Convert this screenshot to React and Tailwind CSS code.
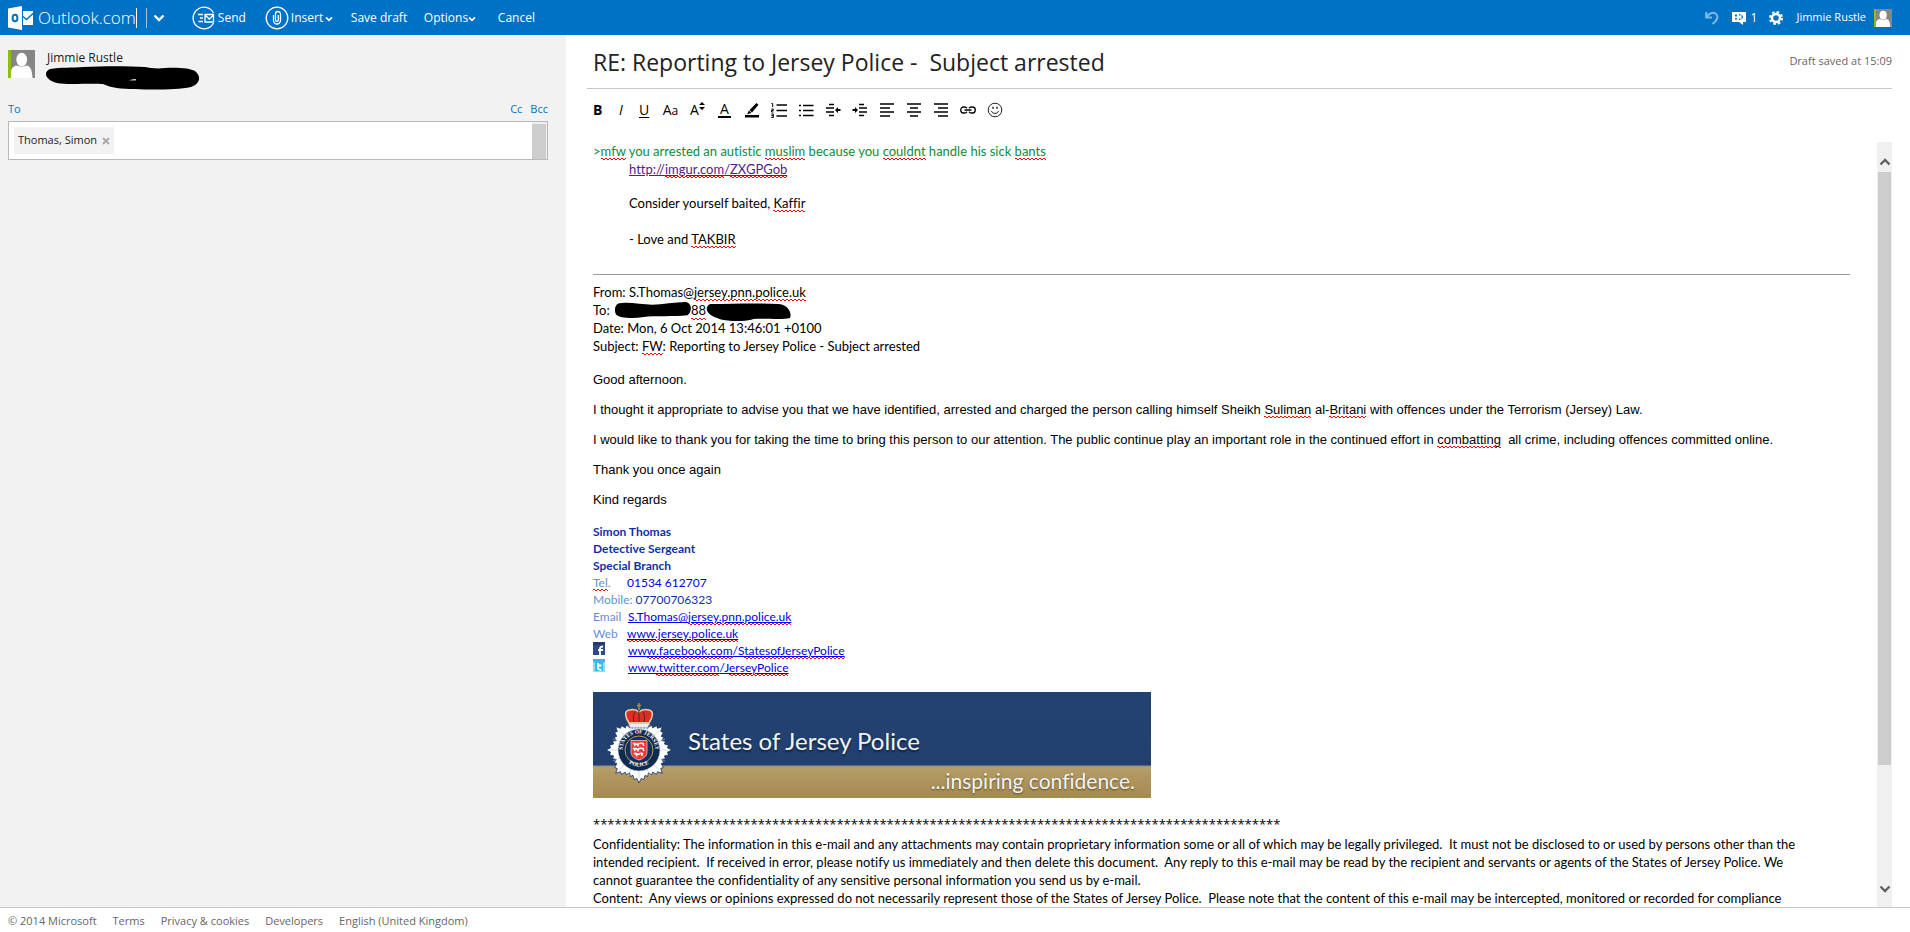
import { useState } from "react";

function Typo({ children }) {
  return (
    <span className="bg-[linear-gradient(90deg,#f00_50%,transparent_50%),linear-gradient(90deg,transparent_50%,#f00_50%)] bg-[length:4px_1px] bg-[position:0_calc(100%-1px),0_100%] bg-repeat-x pb-px">
      {children}
    </span>
  );
}

function Avatar({ className }) {
  return (
    <svg viewBox="0 0 27 27" preserveAspectRatio="none" className={className} role="img" aria-label="Profile picture">
      <rect width="27" height="27" fill="#868686" />
      <rect width="3" height="27" fill="#8cbd18" />
      <ellipse cx="13.7" cy="9.3" rx="5.4" ry="6.6" fill="#fff" />
      <path d="M3 27v-5c0-4 2-6.500 6-7 1.500 1.500 7.500 1.500 9 0 4 .5 6 3 6.500 12z" fill="#fff" />
    </svg>
  );
}

function Chevron({ className }) {
  return (
    <svg viewBox="0 0 12 8" className={className} aria-hidden="true">
      <path d="M1.500 1.500L6 6l4.500-4.500" fill="none" stroke="currentColor" strokeWidth="2.300" />
    </svg>
  );
}

function OutlookLogo() {
  return (
    <svg viewBox="0 0 25 24" className="h-6 w-[25px]" aria-hidden="true">
      <path d="M0 2.500L14 0v24L0 21.500z" fill="#fff" />
      <ellipse cx="7" cy="12" rx="2.400" ry="3.300" fill="none" stroke="#0072c6" strokeWidth="2" />
      <path d="M15 5h10v14H15z" fill="#fff" />
      <path d="M15 10.500l3.500 3L25 7.500" fill="none" stroke="#0072c6" strokeWidth="1.500" />
    </svg>
  );
}

function SendIcon() {
  return (
    <svg viewBox="0 0 24 24" className="size-6" fill="none" stroke="#fff" strokeWidth="1.300" aria-hidden="true">
      <path d="M21.500 7A10.800 10.800 0 1 0 21.500 17" />
      <path d="M6 8.500h5M8 12h3M6.500 15.500h4.500" />
      <path d="M13 8.500h8.500v7.500H13zM13 9l4.300 4 4.200-4" />
    </svg>
  );
}

function InsertIcon() {
  return (
    <svg viewBox="0 0 24 24" className="size-6" fill="none" stroke="#fff" strokeWidth="1.300" aria-hidden="true">
      <circle cx="12" cy="12" r="10.800" />
      <path d="M8.500 9v5.500a3.500 3.500 0 0 0 7 0V8a2.500 2.500 0 0 0-5 0v6a1.400 1.400 0 0 0 2.800 0V9" />
    </svg>
  );
}

function Tool({ label, children }) {
  return (
    <button type="button" aria-label={label} title={label} className="flex h-6 w-[27px] items-center justify-center text-black">
      {children}
    </button>
  );
}

function Lines({ d, children }) {
  return (
    <svg viewBox="0 0 16 16" className="size-4" aria-hidden="true">
      <path d={d} stroke="#000" strokeWidth="1.600" fill="none" />
      {children}
    </svg>
  );
}

function Toolbar() {
  return (
    <div role="toolbar" aria-label="Formatting" className="flex h-[42px] items-center">
      <button type="button" aria-label="Bold" className="flex h-6 w-[22px] items-center text-sm font-bold text-black">B</button>
      <button type="button" aria-label="Italic" className="flex h-6 w-6 items-center pl-1 text-sm text-black italic">I</button>
      <button type="button" aria-label="Underline" className="flex h-6 w-[18px] items-center text-sm text-black underline underline-offset-2">U</button>
      <Tool label="Font"><span className="text-sm font-medium">A<span className="text-xs">a</span></span></Tool>
      <Tool label="Font size">
        <span className="text-sm font-medium">A</span>
        <svg viewBox="0 0 6 8" className="mb-2 h-2 w-1.5" aria-hidden="true"><path d="M0 3l3-3 3 3zM0 5h6L3 8z" /></svg>
      </Tool>
      <Tool label="Font colour">
        <span className="h-4 border-b-2 border-black px-0.5 text-sm leading-[14px] font-medium">A</span>
      </Tool>
      <Tool label="Highlight">
        <svg viewBox="0 0 16 16" className="size-4" aria-hidden="true">
          <path d="M1 13h14v2.500H1zM12.500 1l2 1.800L8 10.500 5.500 8zM5 8.600l2.400 2.400L3 12.200z" />
        </svg>
      </Tool>
      <Tool label="Numbered list">
        <Lines d="M5.500 3h10.500M5.500 8.500h10.500M5.500 14h10.500">
          <path d="M.5 1.500h1.200v3.500M.3 7h1.900v1.500H.5v1.500h2M.3 12h2v3.500h-2M.3 13.700h2" fill="none" stroke="#000" />
        </Lines>
      </Tool>
      <Tool label="Bulleted list">
        <Lines d="M5 3.500h10.500M5 8.500h10.500M5 13.500h10.500M1 3.500h2M1 8.500h2M1 13.500h2" />
      </Tool>
      <Tool label="Decrease indent">
        <Lines d="M4 2.500h5M1 6h8M1 10h8M4 13.500h5"><path d="M10 8l3-3v2h2.500v2H13v2z" /></Lines>
      </Tool>
      <Tool label="Increase indent">
        <Lines d="M7 2.500h5M7 6h8M7 10h8M7 13.500h5"><path d="M6 8L3 5v2H.5v2H3v2z" /></Lines>
      </Tool>
      <Tool label="Align left"><Lines d="M1 2h14M1 6h10M1 10h14M1 14h10" /></Tool>
      <Tool label="Align centre"><Lines d="M1 2h14M4 6h8M1 10h14M4 14h8" /></Tool>
      <Tool label="Align right"><Lines d="M1 2h14M5 6h10M1 10h14M5 14h10" /></Tool>
      <Tool label="Hyperlink">
        <svg viewBox="0 0 16 16" className="size-4" fill="none" stroke="#000" strokeWidth="1.300" aria-hidden="true">
          <path d="M7 6.200C6.500 5.300 5.500 5 4.500 5h-.8a3 3 0 0 0 0 6h.8C5.500 11 6.500 10.700 7 9.800M9 6.200C9.500 5.300 10.500 5 11.500 5h.8a3 3 0 0 1 0 6h-.8C10.500 11 9.500 10.700 9 9.800M4.500 8h7" />
        </svg>
      </Tool>
      <Tool label="Emoticon">
        <svg viewBox="0 0 16 16" className="size-4" fill="none" stroke="#222" aria-hidden="true">
          <circle cx="8" cy="8" r="6.800" />
          <path d="M4.500 9c.7 3.200 6.300 3.200 7 0" />
          <path d="M6 4.800v2M10 4.800v2" strokeWidth="1.500" />
        </svg>
      </Tool>
    </div>
  );
}

const rays = Array.from({ length: 80 }, (_, i) => {
  const a = (i / 80) * Math.PI * 2 - Math.PI / 2;
  const k = i % 10;
  const d = Math.min(k, 10 - k);
  const outer = [33, 30.5, 30, 28, 28, 26.5][d];
  const r = i % 2 ? outer - 2 : outer;
  return `${(32 + Math.cos(a) * r).toFixed(1)},${(48 + Math.sin(a) * r).toFixed(1)}`;
}).join(" ");

function Badge() {
  return (
    <svg viewBox="0 0 64 82" className="h-[82px] w-16 shrink-0" role="img" aria-label="Police badge">
      <defs>
        <path id="arc-top" d="M16.300 53a16.500 16.500 0 1 1 31.400 0" />
        <path id="arc-bottom" d="M16 56a19.500 19.500 0 0 0 32 0" />
      </defs>
      <polygon points={rays} fill="#fff" stroke="#12305f" strokeWidth=".8" />
      <path d="M32 20v56M4 48h56M12 28l40 40M52 28L12 68M21 22l22 52M43 22L21 74M6 37l52 22M58 37L6 59" stroke="#b9c4d6" strokeWidth=".6" />
      <path d="M21 21h22l-2 5H23z" fill="#e8edf5" stroke="#12305f" strokeWidth=".8" strokeDasharray="2 1" />
      <path d="M22 21c-4-6-5-12 0-13 4-1 8 0 10 2 2-2 6-3 10-2 5 1 4 7 0 13z" fill="#e02b26" stroke="#e4d3a0" strokeWidth="1.500" />
      <path d="M32 9v11M28 10c-2 3-2 6-1 10M36 10c2 3 2 6 1 10" stroke="#5d2422" strokeWidth="1" fill="none" />
      <path d="M22 21h20" stroke="#e4d3a0" strokeWidth="1.500" strokeDasharray="1.500 1" />
      <path d="M32 1v7M30 3.500h4" stroke="#b38b3a" strokeWidth="1.500" />
      <circle cx="32" cy="48" r="21" fill="#10294f" stroke="#dce3ec" strokeWidth=".6" />
      <circle cx="32" cy="48" r="14" fill="#12305f" stroke="#b59a5c" strokeWidth="1" />
      <text fontSize="5.500" fontWeight="700" fill="#fff" fontFamily="Liberation Serif, serif" textAnchor="middle">
        <textPath href="#arc-top" startOffset="50%">STATES OF JERSEY</textPath>
      </text>
      <text fontSize="5.500" fontWeight="700" fill="#fff" fontFamily="Liberation Serif, serif" textAnchor="middle">
        <textPath href="#arc-bottom" startOffset="50%">POLICE</textPath>
      </text>
      <path d="M24 38.500h16V50c0 4-3 6.500-8 8-5-1.500-8-4-8-8z" fill="#ee3a34" stroke="#f7d9d4" strokeWidth=".7" />
      <path d="M26 42c2-2 3 1 5 0s4-1 6 0M27 41l1 3M31 42v2.500M36 42l1 2M26 47c2-2 3 1 5 0s4-1 6 0M27 46l1 3M31 47v2.500M36 47l1 2M27 52c2-2 3 1 5 0s3-1 4 0M29 52l1 2.500M35 52v2" stroke="#fff" strokeWidth="1.500" fill="none" />
    </svg>
  );
}

function Banner() {
  return (
    <div className="relative h-[106px] w-[558px] bg-[linear-gradient(180deg,#234171_0,#21406f_73px,#8c9199_74px,#b59d69_75px,#a58a4f_106px)] font-['Lato',sans-serif] text-[#f4f4f4]">
      <div className="absolute top-2.5 left-3.5 flex items-center gap-[17px]">
        <Badge />
        <span className="pb-1 text-2xl text-shadow-[0_2px_2px_rgb(0_0_0/0.5)]">States of Jersey Police</span>
      </div>
      <span className="absolute right-4 bottom-[5px] text-[21px] leading-6 text-shadow-[0_1px_2px_rgb(0_0_0/0.5)]">...inspiring confidence.</span>
    </div>
  );
}

function Header() {
  return (
    <header className="flex h-[35px] shrink-0 items-center justify-between bg-[#0072c6] pr-[18px] pl-2 text-white">
      <div className="flex items-center">
        <a href="#home" className="flex items-center gap-[5px]">
          <OutlookLogo />
          <span className="border-r border-white text-[17px] leading-5 font-light">Outlook.com</span>
        </a>
        <button type="button" aria-label="Switch app" className="ml-[9px] flex h-5 items-center border-l border-white/60 pl-1.5">
          <Chevron className="h-2 w-3" />
        </button>
        <nav aria-label="Message actions" className="ml-[27px] flex items-center text-xs font-medium">
          <button type="button" className="flex w-[73px] items-center gap-0.5"><SendIcon />Send</button>
          <button type="button" className="flex w-[86px] items-center gap-0.5"><InsertIcon />Insert<Chevron className="mt-0.5 h-1.5 w-2" /></button>
          <button type="button" className="w-[73px] text-left">Save draft</button>
          <button type="button" className="flex w-[74px] items-center">Options<Chevron className="mt-0.5 h-1.5 w-2" /></button>
          <button type="button">Cancel</button>
        </nav>
      </div>
      <div className="flex items-center text-[11px]">
        <button type="button" aria-label="Undo" className="mr-[13px]">
          <svg viewBox="0 0 14 14" className="size-3.5" fill="none" stroke="#7fb8e2" strokeWidth="2" aria-hidden="true">
            <path d="M1.200 1v5.500H7M1.500 6C4 2 8 1 10.500 2.500c3.500 2.500 2 7-3 10.500" />
          </svg>
        </button>
        <button type="button" className="mr-3 flex items-center gap-[5px] text-xs">
          <svg viewBox="0 0 14 14" className="size-3.5" aria-hidden="true">
            <path d="M0 1h14v10h-3v3l-4-3H0z" fill="#fff" />
            <path d="M3 3.500h2v2H3zM3 7h2v1.500H3zM7 3h1.500v1.500H7zM7 7.500h1.500V9H7zM9.500 3.500c2 1.500 2 3.500 0 5" fill="#0072c6" />
          </svg>
          1
        </button>
        <button type="button" aria-label="Settings" className="mr-[13px]">
          <svg viewBox="0 0 14 14" className="size-3.5" fill="none" stroke="#fff" aria-hidden="true">
            <circle cx="7" cy="7" r="4" strokeWidth="2.400" />
            <circle cx="7" cy="7" r="6" strokeWidth="2" strokeDasharray="2.500 2.210" />
          </svg>
        </button>
        <a href="#account" className="flex items-center gap-2">Jimmie Rustle<Avatar className="size-[18px]" /></a>
      </div>
    </header>
  );
}

function Recipients() {
  const [to, setTo] = useState("");
  return (
    <aside className="w-[566px] shrink-0 bg-[#f2f2f2] pt-[15px] pr-[18px] pl-2 text-xs">
      <div className="flex gap-3">
        <Avatar className="h-7 w-[27px]" />
        <div className="leading-4">
          <p>Jimmie Rustle</p>
          <svg viewBox="0 0 154 24" className="-ml-0.5 h-6 w-[154px]" role="img" aria-label="Hidden address">
            <path d="M5 3c10-2 24-1 33-2 20-1 45-1 62 0 5 1 12 2 20 1 12-1 25 0 30 3 6 5 6 12-4 16-15 3-40 3-56 2-14 0-24-1-32-5-12-1-36 1-46-1C0 14-2 6 5 3z" />
            <path d="M84 14.500l4-1.500h3v1.500z" fill="#bbb" />
          </svg>
        </div>
      </div>
      <div className="mt-[11px] flex justify-between text-[11px] leading-4 text-[#0072c6]">
        <label htmlFor="to">To</label>
        <span className="flex gap-2">
          <button type="button">Cc</button>
          <button type="button">Bcc</button>
        </span>
      </div>
      <div className="mt-1 flex h-[39px] border border-[#b8b8b8] bg-white pl-[5px]">
        <span className="my-[5px] flex w-[100px] shrink-0 items-center justify-between bg-[#f2f2f2] px-1 text-[11px] whitespace-nowrap">
          Thomas, Simon
          <button type="button" aria-label="Remove Thomas, Simon">
            <svg viewBox="0 0 8 8" className="size-2" aria-hidden="true"><path d="M1 1l6 6M7 1L1 7" stroke="#aaa" strokeWidth="2" /></svg>
          </button>
        </span>
        <input id="to" value={to} onChange={(e) => setTo(e.target.value)} className="min-w-0 flex-1 px-2 outline-none" />
        <span className="w-[15px] border-t-2 border-r border-[#f0f0f0] bg-[#cdcdcd]" />
      </div>
    </aside>
  );
}

function Scrollbar() {
  return (
    <div aria-hidden="true" className="flex w-[15px] shrink-0 flex-col items-center bg-[#f0f0f0] text-[#606060]">
      <div className="flex h-[30px] items-end pb-1.5"><Chevron className="h-2 w-3 rotate-180" /></div>
      <div className="w-[13px] flex-[593] bg-[#cdcdcd]" />
      <div className="flex-[112]" />
      <div className="flex h-[30px] items-start pt-2"><Chevron className="h-2 w-3" /></div>
    </div>
  );
}

function Link({ href, children }) {
  return <a href={href} className="text-[#0000ee] underline">{children}</a>;
}

function Redacted({ d, className, label }) {
  return <svg viewBox="0 0 84 18" preserveAspectRatio="none" className={className} role="img" aria-label={label}><path d={d} /></svg>;
}

function Message() {
  return (
    <article className="min-w-0 flex-1 overflow-hidden pr-[27px] pl-[6px] font-['Lato',sans-serif] text-[13px] leading-[18px] text-black [font-variant-ligatures:none]">
      <p className="text-[#0f8a3c]">
        &gt;<Typo>mfw</Typo> you arrested an autistic <Typo>muslim</Typo> because you <Typo>couldnt</Typo> handle his sick <Typo>bants</Typo>
      </p>
      <div className="pl-9">
        <a href="http://imgur.com/ZXGPGob" className="text-[#551a8b] underline">http://<Typo>imgur.com</Typo>/<Typo>ZXGPGob</Typo></a>
        <p className="mt-4">Consider yourself baited, <Typo>Kaffir</Typo></p>
        <p className="mt-[18px]">- Love and <Typo>TAKBIR</Typo></p>
      </div>
      <hr className="mt-[26px] mb-2 border-[#9a9a9a]" />
      <p>From: S.Thomas@<Typo>jersey.pnn.police.uk</Typo></p>
      <p className="flex h-[18px] items-center">
        To:&nbsp;
        <Redacted className="ml-0.5 h-4 w-[76px]" label="Hidden name" d="M3 2c10-3 26 1 38 1S66 0 78 0c8 1 7 12 2 15-14 2-38 0-48 2-14 2-27 1-31-3C-1 9 0 4 3 2z" />
        <Typo>88</Typo>
        <Redacted className="mt-1 h-[18px] w-[85px]" label="Hidden domain" d="M4 1c20 0 44-1 68 0 10 1 13 10 11 14-8 2-24 0-36 1-8 3-28 3-36-1C2 12-3 5 4 1z" />
      </p>
      <p>Date: Mon, 6 Oct 2014 13:46:01 +0100</p>
      <p>Subject: <Typo>FW</Typo>: Reporting to Jersey Police - Subject arrested</p>

      <div className="mt-4 flex flex-col gap-3 font-['Liberation_Sans',sans-serif]">
        <p>Good afternoon.</p>
        <p>
          I thought it appropriate to advise you that we have identified, arrested and charged the person calling himself Sheikh <Typo>Suliman</Typo> al-<Typo>Britani</Typo> with offences under the Terrorism (Jersey) Law.
        </p>
        <p>
          I would like to thank you for taking the time to bring this person to our attention. The public continue play an important role in the continued effort in <Typo>combatting</Typo>&nbsp; all crime, including offences committed online.
        </p>
        <p>Thank you once again</p>
        <p>Kind regards</p>
      </div>

      <address className="mt-3.5 text-xs leading-[17px] text-[#6a8fd0] not-italic">
        <p className="font-bold text-[#1230a8]">Simon Thomas</p>
        <p className="font-bold text-[#1230a8]">Detective Sergeant</p>
        <p className="font-bold text-[#1230a8]">Special Branch</p>
        <p className="flex"><span className="w-[34px]"><Typo>Tel</Typo>.</span><span className="text-[#0000ee]">01534 612707</span></p>
        <p>Mobile: <span className="text-[#1230a8]">07700706323</span></p>
        <p className="flex"><span className="w-[35px]">Email</span><Link href="mailto:S.Thomas@jersey.pnn.police.uk">S.Thomas@<Typo>jersey.pnn.police.uk</Typo></Link></p>
        <p className="flex"><span className="w-[34px]">Web</span><Link href="http://www.jersey.police.uk"><Typo>www.jersey.police.uk</Typo></Link></p>
        <p className="flex">
          <span className="w-[35px]">
            <svg viewBox="0 0 12 13" className="h-[13px] w-3" role="img" aria-label="Facebook">
              <rect width="12" height="13" fill="#2f4a86" />
              <rect width="12" height="3" fill="#233a6d" />
              <path d="M7 13V6.500C7 5 8 4.500 10 4.500M5 8h5" stroke="#fff" strokeWidth="1.800" fill="none" />
            </svg>
          </span>
          <Link href="http://www.facebook.com/StatesofJerseyPolice">ww<Typo>w.facebook.com</Typo>/S<Typo>tatesofJerseyPolice</Typo></Link>
        </p>
        <p className="flex">
          <span className="w-[35px]">
            <svg viewBox="0 0 12 13" className="h-[13px] w-3" role="img" aria-label="Twitter">
              <rect width="12" height="13" fill="#8fdcf5" />
              <rect width="12" height="3" fill="#35b9e6" />
              <rect x="2" y="3" width="8" height="9" fill="#35b9e6" />
              <path d="M5 4v5c0 1.500 1 1.800 3.500 1.800M5 6.500h3.500" stroke="#fff" strokeWidth="1.800" fill="none" />
            </svg>
          </span>
          <Link href="http://www.twitter.com/JerseyPolice">www<Typo>.twitter.com</Typo>/J<Typo>erseyPolice</Typo></Link>
        </p>
      </address>

      <div className="mt-4"><Banner /></div>

      <p className="mt-[17px] font-['Open_Sans',sans-serif]">{"*".repeat(96)}</p>
      <p className="mt-0.5">
        Confidentiality: The information in this e-mail and any attachments may contain proprietary information some or all of which may be legally privileged.&nbsp; It must not be disclosed to or used by persons other than the<br />
        intended recipient.&nbsp; If received in error, please notify us immediately and then delete this document.&nbsp; Any reply to this e-mail may be read by the recipient and servants or agents of the States of Jersey Police. We<br />
        cannot guarantee the confidentiality of any sensitive personal information you send us by e-mail.
      </p>
      <p className="whitespace-nowrap">
        Content:&nbsp; Any views or opinions expressed do not necessarily represent those of the States of Jersey Police.&nbsp; Please note that the content of this e-mail may be intercepted, monitored or recorded for compliance
      </p>
    </article>
  );
}

export default function App() {
  const [subject, setSubject] = useState("RE: Reporting to Jersey Police -  Subject arrested");
  return (
    <div className="flex h-screen flex-col bg-white font-['Open_Sans',sans-serif] text-[#222]">
      <Header />
      <div className="flex min-h-0 flex-1">
        <Recipients />
        <main className="flex min-w-0 flex-1 flex-col pr-[18px] pl-[21px]">
          <div className="flex h-[54px] shrink-0 items-center border-b border-[#c8c8c8] pl-[6px]">
            <input aria-label="Subject" value={subject} onChange={(e) => setSubject(e.target.value)} className="min-w-0 flex-1 text-[23px] leading-8 outline-none" />
            <span className="text-[11px] text-[#666]">Draft saved at 15:09</span>
          </div>
          <div className="pl-[6px]"><Toolbar /></div>
          <div className="mt-[11px] flex min-h-0 flex-1">
            <Message />
            <Scrollbar />
          </div>
        </main>
      </div>
      <footer className="flex h-[25px] shrink-0 items-center gap-4 border-t border-[#c8c8c8] px-2 pt-0.5 text-[11px] text-[#666]">
        <span>© 2014 Microsoft</span>
        <a href="#terms">Terms</a>
        <a href="#privacy">Privacy &amp; cookies</a>
        <a href="#developers">Developers</a>
        <a href="#language">English (United Kingdom)</a>
      </footer>
    </div>
  );
}
